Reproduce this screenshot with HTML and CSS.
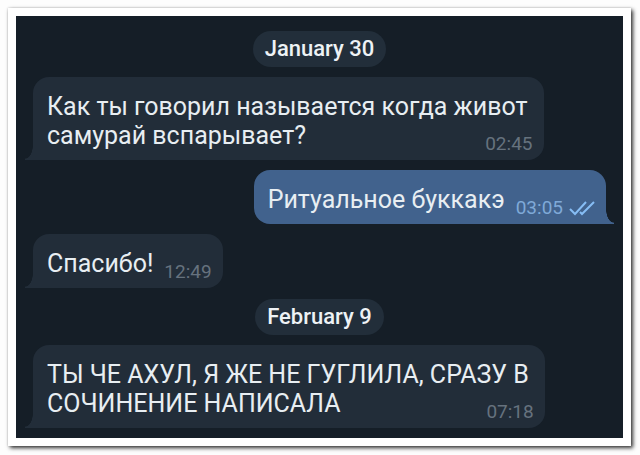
FILE: index.html
```html
<!DOCTYPE html>
<html lang="ru">
<head>
  <meta charset="utf-8">
  <title>Chat</title>
  <link rel="stylesheet" href="styles.css">
</head>
<body>
  <div class="frame">
    <main class="chat">
      <div class="date">January 30</div>

      <div class="message">
        <p><span class="text">Как ты говорил называется когда живот<br>самурай вспарывает?</span>
        <span class="meta"><time>02:45</time></span></p>
      </div>

      <div class="message message-out">
        <p><span class="text">Ритуальное буккакэ</span>
        <span class="meta"><time>03:05</time>
          <svg class="checks" width="26" height="16" viewBox="0 0 26 16" aria-label="Read">
            <path d="M1 9l5 5L17 2M11 12l2 2L25 2" fill="none" stroke="currentColor" stroke-width="2"/>
          </svg></span></p>
      </div>

      <div class="message">
        <p><span class="text">Спасибо!</span>
        <span class="meta"><time>12:49</time></span></p>
      </div>

      <div class="date">February 9</div>

      <div class="message">
        <p><span class="text">ТЫ ЧЕ АХУЛ, Я ЖЕ НЕ ГУГЛИЛА, СРАЗУ В<br>СОЧИНЕНИЕ НАПИСАЛА</span>
        <span class="meta"><time>07:18</time></span></p>
      </div>
    </main>
  </div>
</body>
</html>
```

FILE: styles.css
```css
body {
  margin: 0;
  padding: 8px;
  background-color: #fdfdfd;
  font-family: Roboto, sans-serif;
}

.frame {
  margin-right: 1px;
  padding: 8px;
  background-color: #fff;
  box-shadow: 2px 2px 4px rgba(0, 0, 0, 0.8), 0 0 2px rgba(0, 0, 0, 0.2);
}

.chat {
  display: flex;
  flex-direction: column;
  align-items: flex-start;
  gap: 10px;
  padding: 14px 17px 10px;
  background-color: #151e27;
}

.date {
  align-self: center;
  margin-top: 1px;
  padding: 0 12px;
  border-radius: 18px;
  background-color: #222e3a;
  color: #eef2f5;
  font-size: 22px;
  font-weight: 500;
  line-height: 36px;
}

.message {
  --bubble: #222d39;
  position: relative;
  padding: 15px 11px 10px 14px;
  border-radius: 16px 16px 16px 0;
  background-color: var(--bubble);
  color: #e8eef2;
  font-size: 25px;
  line-height: 29px;
}

/* tail */
.message::before {
  content: "";
  position: absolute;
  bottom: 0;
  right: 100%;
  width: 8px;
  height: 14px;
  background: radial-gradient(8px 13px at 0 0, transparent 94%, var(--bubble) 100%);
}

.message-out {
  --bubble: #41628d;
  align-self: flex-end;
  border-radius: 16px 16px 0 16px;
}

.message-out::before {
  right: auto;
  left: 100%;
  transform: scaleX(-1);
}

.message p {
  margin: 0;
}

.text {
  padding-right: 5px;
  -webkit-box-decoration-break: clone;
  box-decoration-break: clone;
}

.meta {
  float: right;
  display: flex;
  align-items: center;
  gap: 6px;
  margin: 13px 0 -13px 6px;
  color: #66727e;
  font-size: 19px;
  line-height: 20px;
}

.message-out .meta {
  color: #7fa9d8;
}

.checks {
  color: #86bdf5;
}
```
